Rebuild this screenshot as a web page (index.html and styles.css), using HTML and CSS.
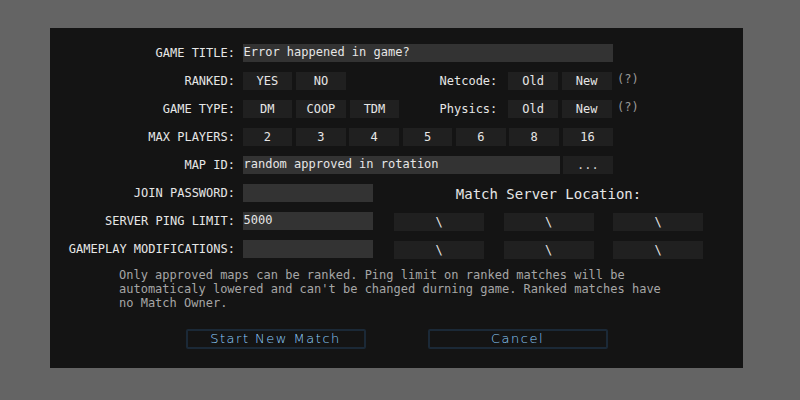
FILE: index.html
```html
<!DOCTYPE html>
<html>
<head>
<meta charset="utf-8">
<link rel="stylesheet" href="styles.css">
</head>
<body>
<div class="panel">
  <div class="form">
    <div class="row">
      <div class="label">GAME TITLE:</div>
      <div class="input w-title">Error happened in game?</div>
    </div>
    <div class="row">
      <div class="label">RANKED:</div>
      <div class="group g2">
        <div class="btn">YES</div>
        <div class="btn">NO</div>
        <div class="sublabel">Netcode:</div>
        <div class="btn">Old</div>
        <div class="btn">New</div>
      </div>
      <div class="help">(?)</div>
    </div>
    <div class="row">
      <div class="label">GAME TYPE:</div>
      <div class="group g3">
        <div class="btn">DM</div>
        <div class="btn">COOP</div>
        <div class="btn">TDM</div>
        <div class="sublabel">Physics:</div>
        <div class="btn">Old</div>
        <div class="btn">New</div>
      </div>
      <div class="help">(?)</div>
    </div>
    <div class="row">
      <div class="label">MAX PLAYERS:</div>
      <div class="grid7">
        <div class="btn">2</div>
        <div class="btn">3</div>
        <div class="btn">4</div>
        <div class="btn">5</div>
        <div class="btn">6</div>
        <div class="btn">8</div>
        <div class="btn">16</div>
      </div>
    </div>
    <div class="row">
      <div class="label">MAP ID:</div>
      <div class="input w-map">random approved in rotation</div>
      <div class="btn dots">...</div>
    </div>
    <div class="split">
      <div class="left">
        <div class="row">
          <div class="label">JOIN PASSWORD:</div>
          <div class="input w-small"></div>
        </div>
        <div class="row">
          <div class="label">SERVER PING LIMIT:</div>
          <div class="input w-small">5000</div>
        </div>
        <div class="row">
          <div class="label">GAMEPLAY MODIFICATIONS:</div>
          <div class="input w-small"></div>
        </div>
      </div>
      <div class="right">
        <div class="loc-title">Match Server Location:</div>
        <div class="loc-grid">
          <div class="btn">\</div>
          <div class="btn">\</div>
          <div class="btn">\</div>
          <div class="btn">\</div>
          <div class="btn">\</div>
          <div class="btn">\</div>
        </div>
      </div>
    </div>
  </div>
  <p class="note">Only approved maps can be ranked. Ping limit on ranked matches will be automaticaly lowered and can't be changed durning game. Ranked matches have no Match Owner.</p>
  <div class="actions">
    <div class="action">Start New Match</div>
    <div class="action">Cancel</div>
  </div>
</div>
</body>
</html>
```

FILE: styles.css
```css
html, body {
  margin: 0;
  padding: 0;
}
body {
  background: #646464;
  width: 800px;
  height: 400px;
  overflow: hidden;
  font-family: "DejaVu Sans Mono", monospace;
  font-size: 12px;
  color: #e6e6e6;
}
.panel {
  margin: 28px 0 0 50px;
  width: 693px;
  height: 340px;
  box-sizing: border-box;
  background: #141414;
  padding-top: 16px;
}
.form {
  display: flex;
  flex-direction: column;
  gap: 10px;
}
.row {
  display: flex;
  align-items: center;
  height: 18px;
}
.label {
  width: 185px;
  margin-right: 7.5px;
  text-align: right;
  white-space: nowrap;
  line-height: 18px;
}
.input {
  height: 18px;
  line-height: 17px;
  background: #333333;
  padding-left: 1px;
  box-sizing: border-box;
  white-space: nowrap;
}
.w-title { width: 370px; }
.w-map { width: 317.5px; margin-right: 3px; }
.w-small { width: 130px; }
.group {
  display: grid;
  width: 369px;
  column-gap: 4px;
  height: 18px;
}
.g2 { grid-template-columns: repeat(2, 49.6px) 1fr repeat(2, 49.6px); }
.g3 { grid-template-columns: repeat(3, 49.6px) 1fr repeat(2, 49.6px); }
.grid7 {
  display: grid;
  width: 370px;
  grid-template-columns: repeat(7, 1fr);
  column-gap: 3.5px;
  height: 18px;
}
.btn {
  height: 18px;
  line-height: 18px;
  background: #202020;
  text-align: center;
  white-space: nowrap;
}
.dots {
  width: 49.6px;
  color: #cfcfcf;
}
.sublabel {
  text-align: right;
  padding-right: 7px;
  line-height: 18px;
}
.help {
  color: #9a9a9a;
  margin-left: 5.5px;
  line-height: 14px;
  align-self: flex-start;
}
.split {
  display: flex;
  gap: 21.5px;
}
.left {
  display: flex;
  flex-direction: column;
  gap: 10px;
}
.right {
  display: flex;
  flex-direction: column;
  gap: 10px;
  width: 309px;
}
.loc-title {
  height: 18px;
  line-height: 18px;
  font-size: 14px;
  text-align: center;
  padding-top: 1px;
}
.loc-grid {
  display: grid;
  grid-template-columns: repeat(3, 90px);
  column-gap: 19.5px;
  row-gap: 10px;
}
.note {
  width: 555px;
  margin: 9px auto 0;
  color: #a6a6a6;
  font-size: 12px;
  line-height: 14px;
}
.actions {
  display: flex;
  justify-content: center;
  gap: 62px;
  margin-top: 19px;
}
.action {
  width: 180px;
  height: 20px;
  box-sizing: border-box;
  border: 2px solid #1b2937;
  border-radius: 2px;
  text-align: center;
  line-height: 16px;
  font-family: "DejaVu Sans", sans-serif;
  font-weight: 200;
  font-size: 13px;
  letter-spacing: 1.5px;
  color: #8fd0ff;
}
```
